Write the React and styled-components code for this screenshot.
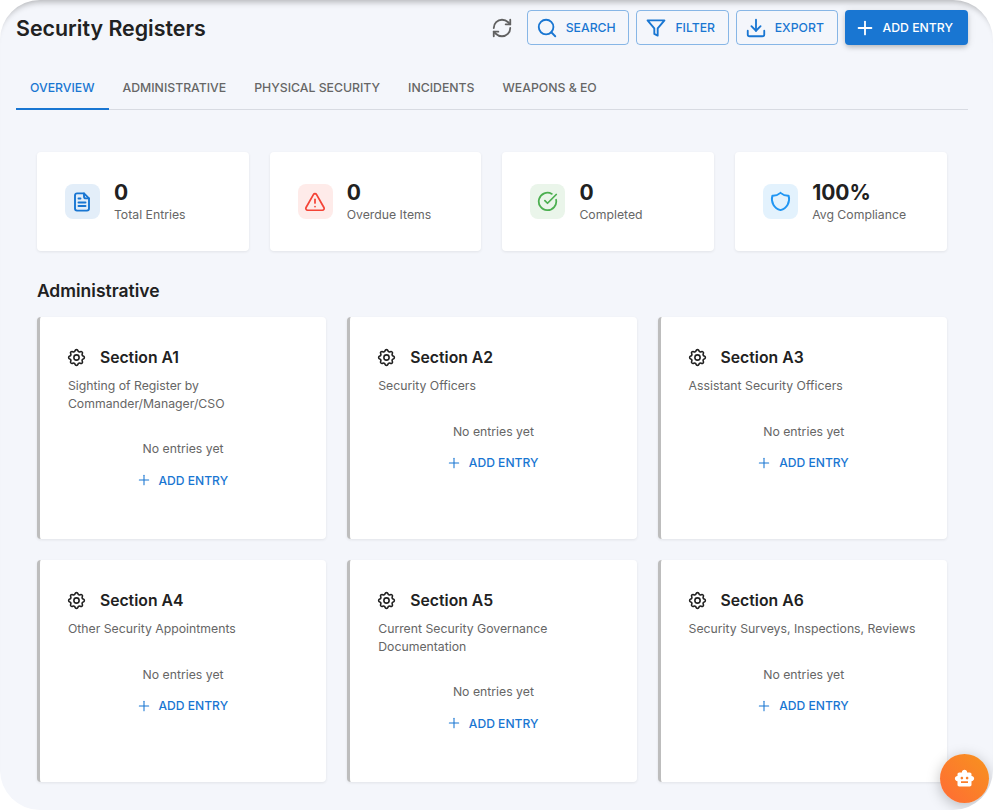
import styled, { createGlobalStyle } from "styled-components";
import {
  RefreshCw,
  Search,
  Download,
  Plus,
  TriangleAlert,
  CircleCheckBig,
} from "lucide-react";
import { TbShield, TbSettings } from "react-icons/tb";

const GlobalStyle = createGlobalStyle`
  html, body {
    margin: 0;
    padding: 0;
    background: #fff;
  }
  body {
    font-family: Inter, "Liberation Sans", sans-serif;
  }
`;

const Frame = styled.div`
  position: relative;
  box-sizing: border-box;
  width: 993px;
  height: 810px;
  overflow: hidden;
  background: #f4f6fb;
  border-radius: 40px;
  padding: 10px 25px 0 16px;
  box-shadow: inset 0 8px 6px -6px rgba(0, 0, 0, 0.28);
`;

const Header = styled.div`
  display: flex;
  align-items: center;
  justify-content: space-between;
  height: 35px;
`;

const Title = styled.h1`
  margin: 0;
  font-size: 21.4px;
  font-weight: 600;
  color: #212121;
`;

const Actions = styled.div`
  display: flex;
  align-items: center;
  gap: 7px;
`;

const RefreshButton = styled.button`
  display: flex;
  align-items: center;
  justify-content: center;
  width: 22px;
  height: 22px;
  padding: 0;
  margin-right: 7px;
  border: none;
  background: none;
  color: #616161;
`;

const OutlineButton = styled.button`
  display: flex;
  align-items: center;
  gap: 8px;
  box-sizing: border-box;
  height: 35px;
  padding: 0 12.7px 0 8px;
  border: 1px solid rgba(25, 118, 210, 0.5);
  border-radius: 4px;
  background: transparent;
  color: #1976d2;
  font-family: inherit;
  font-size: 12.25px;
  font-weight: 500;
`;

const FilledButton = styled(OutlineButton)`
  border: none;
  background: #1976d2;
  color: #fff;
  padding: 0 15px 0 9px;
  gap: 7px;
  box-shadow: 0 3px 5px -1px rgba(0, 0, 0, 0.2), 0 1px 8px rgba(0, 0, 0, 0.1);
`;

const Tabs = styled.div`
  display: flex;
  height: 44px;
  margin-top: 21px;
  box-sizing: border-box;
  border-bottom: 1px solid #d8dbe2;
`;

const Tab = styled.div`
  display: flex;
  align-items: center;
  box-sizing: border-box;
  height: 44px;
  padding: 0 14px;
  font-size: 12.27px;
  font-weight: 500;
  color: ${(props) => (props.$active ? "#1976d2" : "#666")};
  border-bottom: 2px solid ${(props) => (props.$active ? "#1976d2" : "transparent")};
`;

const Content = styled.div`
  padding: 42px 21.1px 0 20.9px;
`;

const StatGrid = styled.div`
  display: grid;
  grid-template-columns: repeat(4, 1fr);
  gap: 21px;
`;

const Card = styled.div`
  box-sizing: border-box;
  background: #fff;
  border-radius: 4px;
  box-shadow: 0 1px 3px rgba(0, 0, 0, 0.08);
`;

const StatCard = styled(Card)`
  display: flex;
  align-items: center;
  gap: 14px;
  height: 99px;
  padding: 0 28px;
`;

const StatIcon = styled.div`
  display: flex;
  align-items: center;
  justify-content: center;
  flex: none;
  width: 35px;
  height: 35px;
  border-radius: 8px;
  background: ${(props) => props.$bg};
  color: ${(props) => props.$color};
`;

const StatValue = styled.div`
  margin-bottom: 1px;
  font-size: 21px;
  font-weight: 700;
  line-height: 25px;
  color: #212121;
`;

const StatLabel = styled.div`
  font-size: 12.25px;
  line-height: 18px;
  color: #666;
`;

const SectionHeading = styled.h2`
  margin: 28px 0 14px;
  font-size: 17.5px;
  line-height: 24px;
  font-weight: 600;
  color: #212121;
`;

const SectionGrid = styled.div`
  display: grid;
  grid-template-columns: repeat(3, 1fr);
  gap: 21px;
`;

const SectionCard = styled(Card)`
  height: 222px;
  padding: 28px 28px 0;
  border-left: 3px solid #bdbdbd;
`;

const SectionHead = styled.div`
  display: flex;
  align-items: center;
  gap: 13px;
  height: 24px;
  font-size: 15.75px;
  font-weight: 600;
  color: #212121;
  svg {
    margin-left: -2px;
    font-size: 21px;
  }
`;

const SectionDesc = styled.div`
  margin-top: 8px;
  font-size: 12.25px;
  line-height: 17.5px;
  color: #666;
`;

const Empty = styled.div`
  display: flex;
  flex-direction: column;
  align-items: center;
  margin-top: 28px;
`;

const EmptyText = styled.div`
  font-size: 12.25px;
  line-height: 17.5px;
  color: #666;
`;

const AddLink = styled.button`
  display: flex;
  align-items: center;
  gap: 7px;
  margin-top: 7px;
  height: 31px;
  padding: 0 2.5px 0 0;
  border: none;
  background: none;
  color: #1976d2;
  font-family: inherit;
  font-size: 12.1px;
  font-weight: 500;
`;

const Fab = styled.button`
  position: absolute;
  right: 4px;
  bottom: 7px;
  display: flex;
  align-items: center;
  justify-content: center;
  width: 49px;
  height: 49px;
  padding: 0;
  border: none;
  border-radius: 50%;
  background: linear-gradient(45deg, #ff6b35, #f7931e);
  box-shadow: 0 3px 14px rgba(0, 0, 0, 0.25);
`;

const FunnelIcon = () => (
  <svg width="22" height="22" viewBox="-1 -1 26 26" fill="none" stroke="currentColor" strokeWidth="2.2" strokeLinejoin="round">
    <polygon points="22 3 2 3 10 12.46 10 19 14 21 14 12.46 22 3" />
  </svg>
);

const DocIcon = () => (
  <svg width="24" height="24" viewBox="0 0 24 24" fill="none" stroke="currentColor" strokeWidth="1.9" strokeLinecap="round" strokeLinejoin="round">
    <path d="M14 3.4H7a2 2 0 0 0-2 2v13.2a2 2 0 0 0 2 2h10a2 2 0 0 0 2-2V8.4z" />
    <path d="M14 3.4v3a2 2 0 0 0 2 2h3" />
    <path d="M8.5 8.5h2M8.5 12.5h7M8.5 16h7" />
  </svg>
);

const stats = [
  { value: "0", label: "Total Entries", icon: <DocIcon />, bg: "#e3eef9", color: "#1976d2" },
  { value: "0", label: "Overdue Items", icon: <TriangleAlert size={22} strokeWidth={1.9} />, bg: "#feebe9", color: "#f44336" },
  { value: "0", label: "Completed", icon: <CircleCheckBig size={21} />, bg: "#eaf5ea", color: "#4caf50" },
  { value: "100%", label: "Avg Compliance", icon: <TbShield size={23} />, bg: "#e3f2fd", color: "#2196f3" },
];

const sections = [
  { name: "Section A1", desc: "Sighting of Register by Commander/Manager/CSO" },
  { name: "Section A2", desc: "Security Officers" },
  { name: "Section A3", desc: "Assistant Security Officers" },
  { name: "Section A4", desc: "Other Security Appointments" },
  { name: "Section A5", desc: "Current Security Governance Documentation" },
  { name: "Section A6", desc: "Security Surveys, Inspections, Reviews" },
];

const tabs = ["OVERVIEW", "ADMINISTRATIVE", "PHYSICAL SECURITY", "INCIDENTS", "WEAPONS & EO"];

const App = () => {
  return (
    <Frame>
      <GlobalStyle />
      <Header>
        <Title>Security Registers</Title>
        <Actions>
          <RefreshButton>
            <RefreshCw size={22} />
          </RefreshButton>
          <OutlineButton>
            <Search size={22} />
            SEARCH
          </OutlineButton>
          <OutlineButton>
            <FunnelIcon />
            FILTER
          </OutlineButton>
          <OutlineButton>
            <Download size={22} />
            EXPORT
          </OutlineButton>
          <FilledButton>
            <Plus size={22} />
            ADD ENTRY
          </FilledButton>
        </Actions>
      </Header>
      <Tabs>
        {tabs.map((tab, i) => (
          <Tab key={tab} $active={i === 0}>
            {tab}
          </Tab>
        ))}
      </Tabs>
      <Content>
        <StatGrid>
          {stats.map(({ value, label, icon, bg, color }) => (
            <StatCard key={label}>
              <StatIcon $bg={bg} $color={color}>
                {icon}
              </StatIcon>
              <div>
                <StatValue>{value}</StatValue>
                <StatLabel>{label}</StatLabel>
              </div>
            </StatCard>
          ))}
        </StatGrid>
        <SectionHeading>Administrative</SectionHeading>
        <SectionGrid>
          {sections.map((s) => (
            <SectionCard key={s.name}>
              <SectionHead>
                <TbSettings strokeWidth={1.8} />
                {s.name}
              </SectionHead>
              <SectionDesc>{s.desc}</SectionDesc>
              <Empty>
                <EmptyText>No entries yet</EmptyText>
                <AddLink>
                  <Plus size={16} strokeWidth={1.6} />
                  ADD ENTRY
                </AddLink>
              </Empty>
            </SectionCard>
          ))}
        </SectionGrid>
      </Content>
      <Fab>
        <svg width="21" height="21" viewBox="0 0 24 24" fill="#fff">
          <path d="M20 9V7c0-1.1-.9-2-2-2h-3c0-1.66-1.34-3-3-3S9 3.34 9 5H6c-1.1 0-2 .9-2 2v2c-1.66 0-3 1.34-3 3s1.34 3 3 3v4c0 1.1.9 2 2 2h12c1.1 0 2-.9 2-2v-4c1.66 0 3-1.34 3-3s-1.34-3-3-3zM7.5 11.5c0-.83.67-1.5 1.5-1.5s1.5.67 1.5 1.5S9.83 13 9 13s-1.5-.67-1.5-1.5zM16 17H8v-2h8v2zm-1-4c-.83 0-1.5-.67-1.5-1.5S14.17 10 15 10s1.5.67 1.5 1.5S15.83 13 15 13z" />
        </svg>
      </Fab>
    </Frame>
  );
};

export default App;
